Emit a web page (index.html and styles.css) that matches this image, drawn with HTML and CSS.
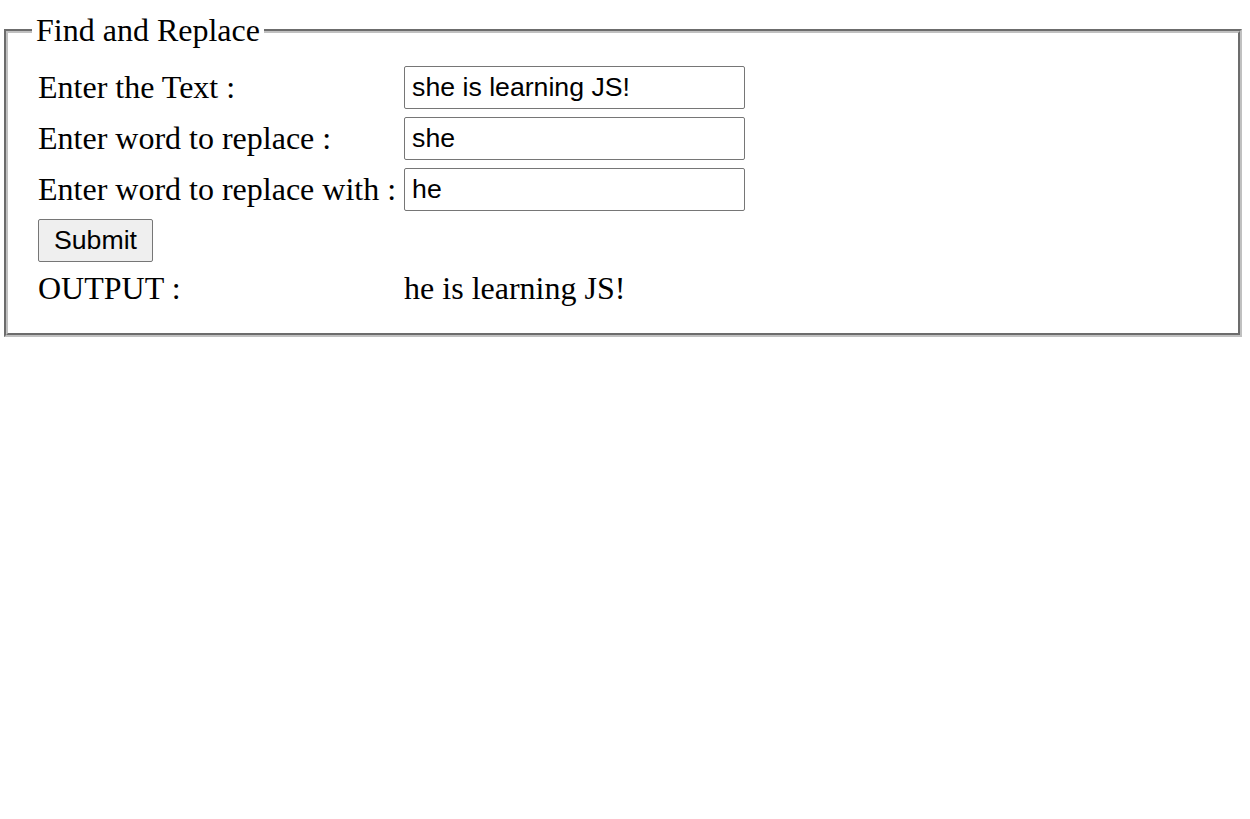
FILE: index.html
```html
<!DOCTYPE html>
<html>
<head>
<meta charset="utf-8">
<title>Find and Replace</title>
<link rel="stylesheet" href="styles.css">
</head>
<body>
<fieldset class="panel">
  <legend class="panel-title">Find and Replace</legend>
  <table class="form-table">
    <tr>
      <td class="label">Enter the Text :</td>
      <td><input class="field" type="text" value="she is learning JS!"></td>
    </tr>
    <tr>
      <td class="label">Enter word to replace :</td>
      <td><input class="field" type="text" value="she"></td>
    </tr>
    <tr>
      <td class="label">Enter word to replace with :</td>
      <td><input class="field" type="text" value="he"></td>
    </tr>
    <tr>
      <td><button class="submit" type="button">Submit</button></td>
      <td></td>
    </tr>
    <tr>
      <td class="label">OUTPUT :</td>
      <td class="result">he is learning JS!</td>
    </tr>
  </table>
</fieldset>
</body>
</html>
```
FILE: styles.css
```css
html, body {
  background: #ffffff;
}

body {
  margin: 0;
  font-family: "Liberation Serif", "Times New Roman", serif;
  font-size: 32px;
  color: #000000;
}

.panel {
  margin: 12px 8px 0 4px;
  padding: 11.2px 24px 20px;
  border: 4px groove rgb(192, 192, 192);
  min-inline-size: 0;
}

.panel-title {
  padding: 0 4px;
}

.form-table {
  border-collapse: separate;
  border-spacing: 4px;
}

.form-table td {
  padding: 2px;
}

.label {
  white-space: nowrap;
}

.field {
  box-sizing: border-box;
  width: 341px;
  margin: 0;
  padding: 5px 7px;
  border: 1px solid #767676;
  border-radius: 2px;
  background: #ffffff;
  color: #000000;
  font-family: "Liberation Sans", Arial, sans-serif;
  font-size: 26.667px;
}

.submit {
  margin: 0;
  padding: 5px 15px;
  border: 1px solid #767676;
  border-radius: 2px;
  background: #efefef;
  color: #000000;
  font-family: "Liberation Sans", Arial, sans-serif;
  font-size: 26.667px;
}
```
